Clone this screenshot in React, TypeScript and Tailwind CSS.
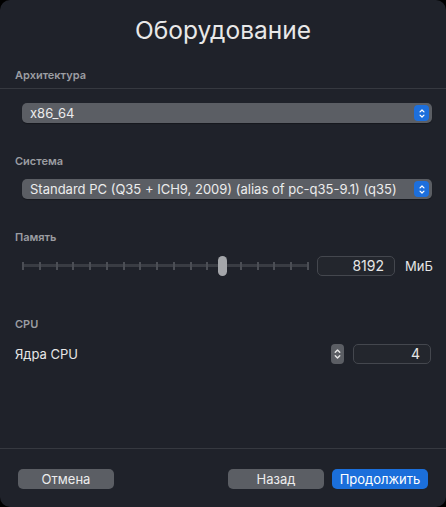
import React from 'react';

const font = { fontFamily: 'Inter, "Noto Sans", sans-serif' };

const UpDown = ({ className = '' }: { className?: string }) => (
  <svg viewBox="0 0 10 14" className={className} fill="none" stroke="currentColor" strokeWidth={1.6} strokeLinecap="round" strokeLinejoin="round">
    <path d="M2.5 5 L5 2.5 L7.5 5" />
    <path d="M2.5 9 L5 11.5 L7.5 9" />
  </svg>
);

const Popup = ({ value }: { value: string }) => (
  <div className="mx-[14px] ml-[22px] h-[20px] rounded-[5px] bg-[#5b5e64] flex items-center pl-[8px] pr-[3px] shadow-[0_1px_1px_rgba(0,0,0,0.3)]">
    <span className="flex-1 text-[13px] leading-none text-[#ececec] whitespace-nowrap">{value}</span>
    <div className="w-[15px] h-[16px] rounded-[4px] bg-[#1d6fdc] flex items-center justify-center text-white">
      <UpDown className="w-[8px] h-[11px]" />
    </div>
  </div>
);

const Label = ({ children }: { children: React.ReactNode }) => (
  <div className="pl-[15px] text-[11px] leading-[14px] font-semibold text-[#9b9da2]">{children}</div>
);

const Slider = () => {
  const ticks = Array.from({ length: 18 });
  return (
    <div className="relative w-[287px] h-[20px]">
      <div className="absolute left-0 right-0 top-[8px] h-[3px] bg-[#393c43] rounded-full" />
      <div className="absolute inset-0 flex justify-between items-center px-0">
        {ticks.map((_, i) => (
          <div key={i} className="w-[2px] h-[8px] bg-[#4b4e55]" />
        ))}
      </div>
      <div className="absolute left-[196px] top-0 w-[9px] h-[20px] rounded-full bg-[#a4a6aa]" />
    </div>
  );
};

const Field = ({ value, width }: { value: string; width: string }) => (
  <div className={`${width} h-[20px] rounded-[5px] border border-[#44474e] bg-[#23262d] flex items-center justify-end pr-[10px] text-[14px] leading-none text-[#e6e6e6]`}>
    {value}
  </div>
);

export default function App() {
  return (
    <div className="w-[446px] h-[507px] bg-black" style={font}>
      <div className="w-full h-full rounded-[10px] bg-[#1f222a] flex flex-col overflow-hidden">
        <div className="pt-[13px] text-center text-[24.5px] leading-[34px] text-[#e8e8e8]">Оборудование</div>

        <div className="mt-[21px]">
          <Label>Архитектура</Label>
        </div>
        <div className="mt-[6px] h-px bg-[#363940]" />

        <div className="flex-1 flex flex-col">
          <div className="mt-[14px]">
            <Popup value="x86_64" />
          </div>

          <div className="mt-[31px]">
            <Label>Система</Label>
          </div>
          <div className="mt-[11px]">
            <Popup value="Standard PC (Q35 + ICH9, 2009) (alias of pc-q35-9.1) (q35)" />
          </div>

          <div className="mt-[31px]">
            <Label>Память</Label>
          </div>
          <div className="mt-[12px] flex items-center pl-[22px]">
            <Slider />
            <div className="ml-[8px]">
              <Field value="8192" width="w-[78px]" />
            </div>
            <span className="ml-[10px] text-[13px] leading-none text-[#e6e6e6]">МиБ</span>
          </div>

          <div className="mt-[41px]">
            <Label>CPU</Label>
          </div>
          <div className="mt-[13px] flex items-center pl-[15px] pr-[15px]">
            <span className="flex-1 text-[13px] leading-none text-[#e6e6e6]">Ядра CPU</span>
            <div className="w-[13px] h-[20px] rounded-[4px] bg-[#5b5e64] flex items-center justify-center text-[#e6e6e6]">
              <UpDown className="w-[9px] h-[14px]" />
            </div>
            <div className="ml-[9px]">
              <Field value="4" width="w-[78px]" />
            </div>
          </div>
        </div>

        <div className="h-px bg-[#363940]" />
        <div className="h-[58px] flex items-start pt-[20px] px-[18px]">
          <button className="w-[96px] h-[20px] rounded-[5px] bg-[#5b5e64] text-[13px] leading-none text-[#ececec]">Отмена</button>
          <div className="flex-1" />
          <button className="w-[96px] h-[20px] rounded-[5px] bg-[#5b5e64] text-[13px] leading-none text-[#ececec]">Назад</button>
          <button className="ml-[8px] w-[96px] h-[20px] rounded-[5px] bg-[#1b6fdb] text-[13px] leading-none text-white">Продолжить</button>
        </div>
      </div>
    </div>
  );
}
